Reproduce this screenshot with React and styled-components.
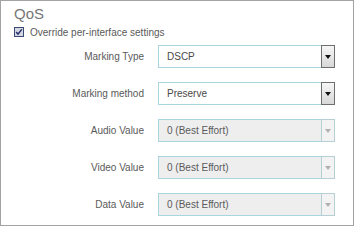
import React from 'react';
import styled, { createGlobalStyle } from 'styled-components';

const GlobalStyle = createGlobalStyle`
  html, body {
    margin: 0;
    padding: 0;
    background: #fff;
  }
  body {
    font-family: "Liberation Sans", Arial, sans-serif;
  }
`;

const Panel = styled.section`
  box-sizing: border-box;
  width: 354px;
  height: 226px;
  border: 1px solid #a3a3a3;
  padding: 4px 0 0 13px;
  background: #fff;
`;

const Title = styled.h2`
  margin: 0;
  font-size: 15px;
  font-weight: normal;
  line-height: 18px;
  color: #777;
`;

const CheckRow = styled.label`
  display: flex;
  align-items: center;
  gap: 6px;
  margin-top: 3px;
  font-size: 10px;
  color: #5a5a5a;
  height: 12px;
`;

const Form = styled.div`
  display: grid;
  grid-template-columns: 130px 177px;
  grid-auto-rows: 23px;
  column-gap: 14px;
  row-gap: 14px;
  margin-top: 7px;
`;

const Label = styled.span`
  display: flex;
  align-items: center;
  justify-content: flex-end;
  font-size: 10px;
  color: #5a5a5a;
`;

const SelectBox = styled.div`
  box-sizing: border-box;
  display: flex;
  height: 23px;
  border: 1px solid #a8d6df;
  border-right: none;
  background: ${({ disabled }) => (disabled ? '#eeeeee' : '#fff')};
`;

const Value = styled.span`
  flex: 1;
  display: flex;
  align-items: center;
  padding-left: 8px;
  font-size: 10px;
  color: ${({ disabled }) => (disabled ? '#5a5a5a' : '#484848')};
`;

const DropButton = styled.span`
  box-sizing: border-box;
  width: 14px;
  margin: -1px 0;
  display: flex;
  align-items: center;
  justify-content: center;
  border: 1px solid ${({ disabled }) => (disabled ? '#b6cfd4' : '#6e6e6e')};
  background: ${({ disabled }) =>
    disabled ? '#f3f3f3' : 'linear-gradient(#f6f6f6, #d8d8d8)'};
`;

const Arrow = styled.span`
  width: 0;
  height: 0;
  border-left: 3px solid transparent;
  border-right: 3px solid transparent;
  border-top: 4px solid ${({ disabled }) => (disabled ? '#b0b0b0' : '#111')};
`;

const CheckIcon = () => (
  <svg width="10" height="10" viewBox="0 0 10 10">
    <rect x="0.5" y="0.5" width="9" height="9" fill="#d4d7df" stroke="#3b4a74" />
    <path d="M2.2 5 L4 7.2 L7.8 2.4" fill="none" stroke="#1f2a6b" strokeWidth="1.4" />
  </svg>
);

const rows = [
  { label: 'Marking Type', value: 'DSCP' },
  { label: 'Marking method', value: 'Preserve' },
  { label: 'Audio Value', value: '0 (Best Effort)', disabled: true },
  { label: 'Video Value', value: '0 (Best Effort)', disabled: true },
  { label: 'Data Value', value: '0 (Best Effort)', disabled: true },
];

const App = () => (
  <>
    <GlobalStyle />
    <Panel>
      <Title>QoS</Title>
      <CheckRow>
        <CheckIcon />
        Override per-interface settings
      </CheckRow>
      <Form>
        {rows.map((r) => (
          <React.Fragment key={r.label}>
            <Label>{r.label}</Label>
            <SelectBox disabled={r.disabled}>
              <Value disabled={r.disabled}>{r.value}</Value>
              <DropButton disabled={r.disabled}>
                <Arrow disabled={r.disabled} />
              </DropButton>
            </SelectBox>
          </React.Fragment>
        ))}
      </Form>
    </Panel>
  </>
);

export default App;
